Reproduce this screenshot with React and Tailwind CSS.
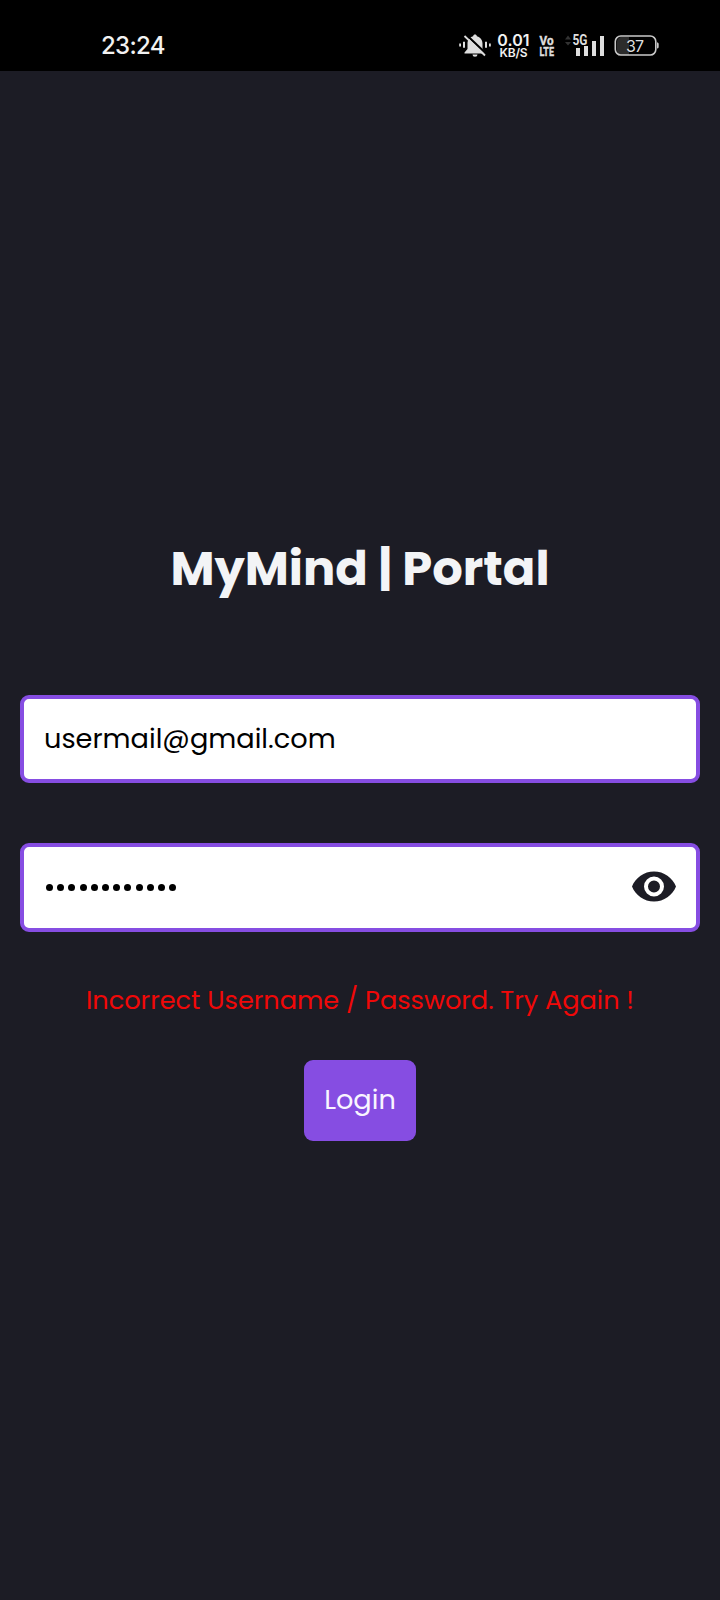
import React from "react";

function StatusBar() {
  return (
    <header className="flex h-[71px] items-start justify-between bg-black pl-[101px] pr-[60px] pt-[33px] font-['Inter',sans-serif] text-[#f2f2f2]">
      <span className="whitespace-nowrap text-[24px] font-medium leading-[26px] tracking-[-0.7px]">23:24</span>
      <div className="flex h-[26px] items-center">
        <svg className="h-[26px] w-[34px]" viewBox="0 0 34 26" fill="#dedede">
          <path d="M17 1.500c-1 0-1.700.7-1.900 1.700-4 1-5.600 4.200-5.600 7.500v5.300l-3 3.500v1h21v-1l-3-3.500v-5.300c0-3.300-1.600-6.500-5.600-7.500C18.700 2.200 18 1.500 17 1.500zM14.500 21.500a2.500 2.200 0 0 0 5 0z" />
          <path d="M1.200 10.500h1.800v3H1.200zM5 8.800h2v6H5zM27 8.800h2v6h-2zM31 10.500h1.800v3H31z" />
          <path d="M8 1.500 29 21.500" stroke="#000" strokeWidth="2.200" fill="none" />
          <path d="M6.500 3 27 22.500" stroke="#dedede" strokeWidth="1.800" fill="none" />
        </svg>
        <div className="ml-[5px] flex w-[33px] flex-col items-center whitespace-nowrap">
          <span className="text-[16px] font-semibold leading-[14px] tracking-[0.1px]">0.01</span>
          <span className="text-[12px] font-semibold leading-[12px] tracking-[-0.2px]">KB/S</span>
        </div>
        <svg className="ml-[9px] h-[26px] w-[16px] overflow-visible" viewBox="0 0 16 26" fill="#dedede" stroke="#dedede" strokeWidth="0.4" fontFamily="Roboto, sans-serif" fontWeight="700" fontSize="12.500">
          <text x="0.500" y="12" textLength="14" lengthAdjust="spacingAndGlyphs">Vo</text>
          <text x="0.500" y="22.500" textLength="14.500" lengthAdjust="spacingAndGlyphs">LTE</text>
        </svg>
        <svg className="ml-[9px] h-[26px] w-[42px]" viewBox="0 0 42 26" fill="#dedede">
          <path d="m1 6.500 3-4 3 4zM1 9l3 3.500L7 9z" fill="#333" />
          <text x="8.500" y="12" fontSize="14" fontWeight="700" fontFamily="Roboto, sans-serif" textLength="15" lengthAdjust="spacingAndGlyphs">5G</text>
          <path d="M12 15h4v8h-4zM20 13h4v10h-4zM28 8h4v15h-4zM36 3h4v20h-4z" />
        </svg>
        <svg className="ml-[8px] h-[26px] w-[46px]" viewBox="0 0 46 26">
          <path d="M8 4h7v18H8c-3 0-5-2-5-5V9c0-3 2-5 5-5z" fill="#2c2c2c" />
          <rect x="1.300" y="3" width="40.500" height="19" rx="5.500" fill="none" stroke="#c9c9c9" strokeWidth="1.600" />
          <path d="M43 9.200c1.700.5 1.700 1 1.700 3.200s0 2.700-1.700 3.200z" fill="#c9c9c9" />
          <text x="21" y="18.500" textAnchor="middle" fontSize="16" fontFamily="Inter, sans-serif" textLength="18" fill="#dedede">37</text>
        </svg>
      </div>
    </header>
  );
}

export default function App() {
  return (
    <div className="flex h-[1600px] w-[720px] flex-col bg-[#1c1c25] font-['Poppins','Inter',sans-serif]">
      <StatusBar />
      <main className="flex flex-col items-center px-5 pt-[462px]">
        <h1 className="whitespace-nowrap text-[48px] font-bold leading-[72px] text-[#f3f4f6]">MyMind | Portal</h1>
        <div className="mt-[90px] flex h-[88px] w-full items-center rounded-[9px] border-4 border-[#864de2] bg-white px-5 text-[27.200px] text-black">
          <span className="whitespace-nowrap">usermail@gmail.com</span>
        </div>
        <div className="mt-[60px] flex h-[89px] w-full items-center justify-between rounded-[9px] border-4 border-[#864de2] bg-white pl-[22px] pr-5">
          <div className="flex gap-[4.200px]" aria-label="Password">
            {Array.from({ length: 12 }, (_, i) => (
              <span key={i} className="h-[7px] w-[7px] rounded-full bg-black" />
            ))}
          </div>
          <svg className="mb-[2px] h-[48px] w-[44px]" viewBox="0 0 44 48" fill="#1c1c25">
            <path fillRule="evenodd" d="M22 8.500C12 8.500 3.500 14.700 0 23.500c3.500 8.800 12 15 22 15s18.500-6.200 22-15c-3.500-8.800-12-15-22-15zm0 5a10 10 0 1 1 0 20 10 10 0 0 1 0-20zm0 4a6 6 0 1 0 0 12 6 6 0 0 0 0-12z" />
          </svg>
        </div>
        <p className="mt-[48px] whitespace-nowrap text-[25.600px] leading-[40px] text-[#f00808]">Incorrect Username / Password. Try Again !</p>
        <button className="mt-[40px] flex h-[81px] w-[112px] items-center justify-center rounded-[9px] bg-[#864de2] text-[27.200px] text-[#f9f5ff]">Login</button>
      </main>
    </div>
  );
}
